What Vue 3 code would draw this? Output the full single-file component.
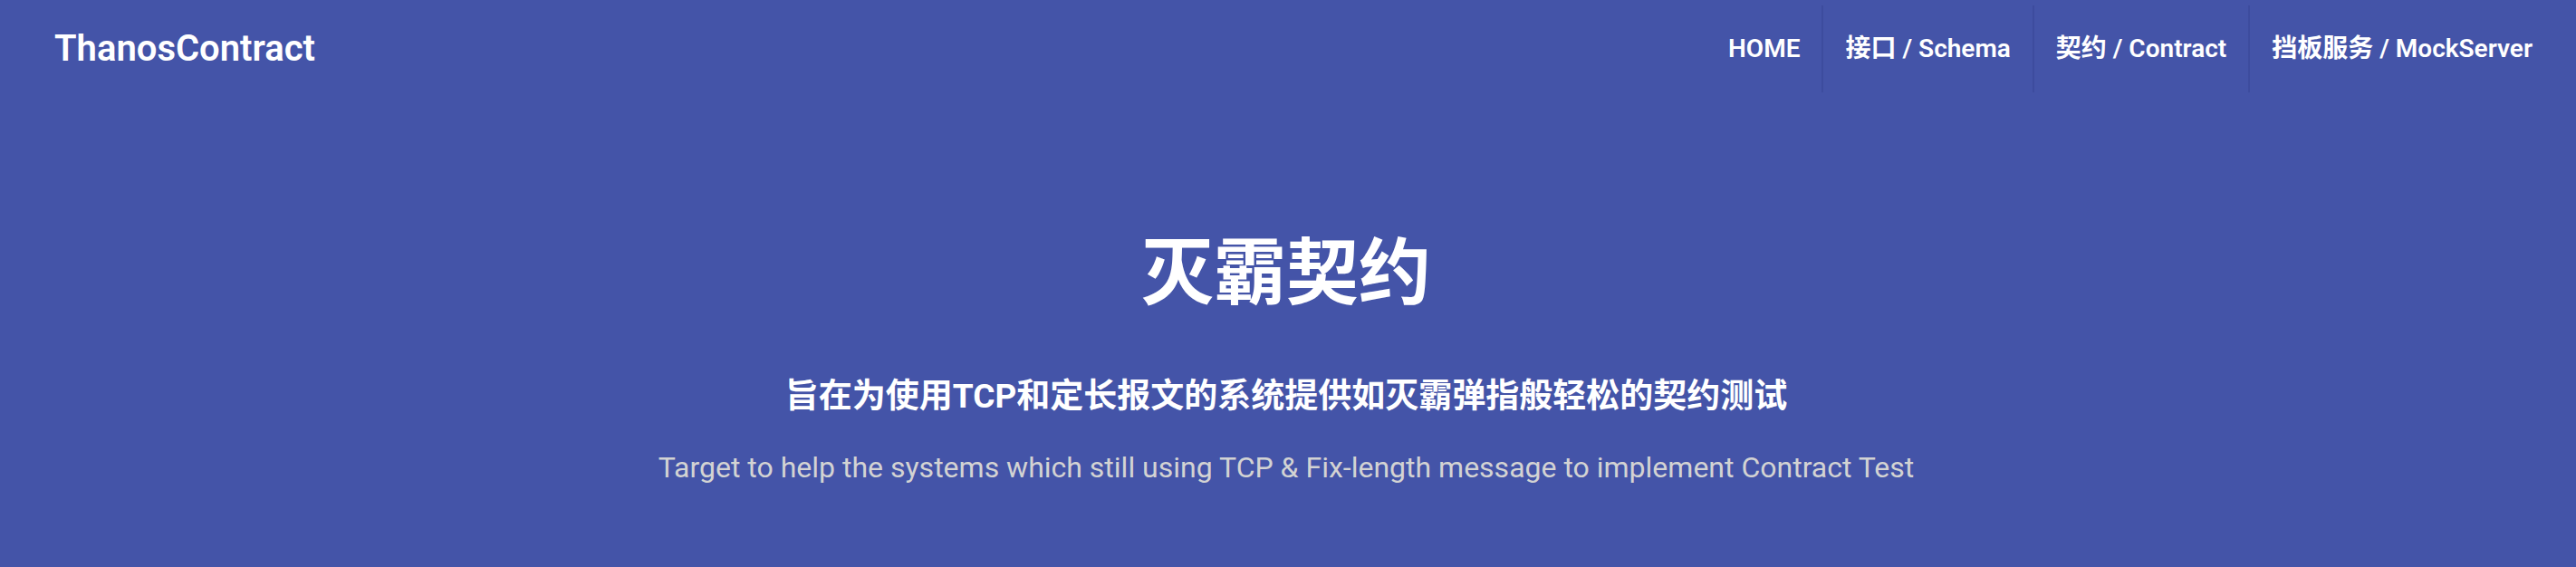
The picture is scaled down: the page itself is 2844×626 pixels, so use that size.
<script setup>
const links = [
  { text: 'HOME', href: '#home' },
  { text: '接口 / Schema', href: '#schema' },
  { text: '契约 / Contract', href: '#contract' },
  { text: '挡板服务 / MockServer', href: '#mockserver' },
]
</script>

<template>
  <div class="page">
    <header class="bar">
      <a class="brand" href="#home">ThanosContract</a>
      <nav class="nav">
        <a v-for="link in links" :key="link.href" class="link" :href="link.href">{{ link.text }}</a>
      </nav>
    </header>
    <main class="hero">
      <h1 class="title">灭霸契约</h1>
      <h2 class="subtitle">旨在为使用TCP和定长报文的系统提供如灭霸弹指般轻松的契约测试</h2>
      <p class="lead">Target to help the systems which still using TCP &amp; Fix-length message to implement Contract Test</p>
    </main>
  </div>
</template>

<style>
body { background: #4454a8; }
</style>

<style scoped>
.page {
  min-height: 100vh;
  box-sizing: border-box;
  background: #4454a8;
  color: #fff;
  font-family: Roboto, "Noto Sans CJK SC", sans-serif;
}
.bar {
  display: flex;
  justify-content: space-between;
  align-items: center;
  padding: 6px 24px 4px 60px;
}
.brand {
  color: #fff;
  text-decoration: none;
  font-size: 40px;
  line-height: 96px;
  font-weight: 600;
}
.nav { display: flex; }
.link {
  color: #fff;
  text-decoration: none;
  font-size: 28px;
  font-weight: 600;
  line-height: 96px;
  padding: 0 24px;
  border-right: 2px solid #3d4c9e;
}
.link:last-child { border-right: 0; }
.hero {
  text-align: center;
  padding: 136px 28px 0 24px;
}
.title {
  margin: 0;
  font-size: 80px;
  line-height: 120px;
  font-weight: 700;
}
.subtitle {
  margin: 48px 0 0;
  font-size: 37px;
  line-height: 56px;
  font-weight: 700;
}
.lead {
  margin: 26px 0 0;
  font-size: 32px;
  line-height: 48px;
  color: #d3d3d3;
}
</style>
